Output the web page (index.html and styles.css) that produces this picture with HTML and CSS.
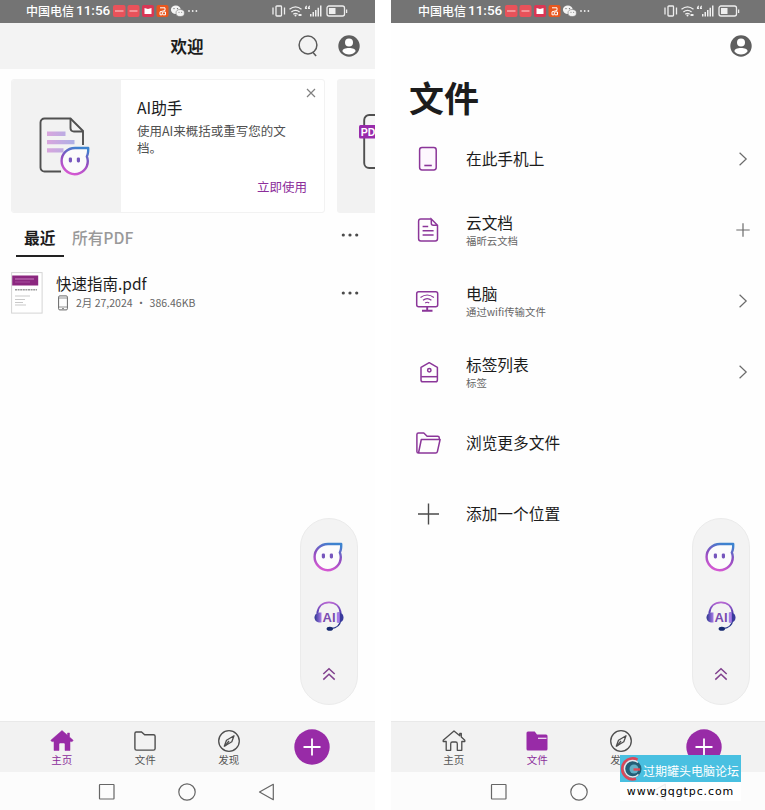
FILE: index.html
```html
<!DOCTYPE html>
<html lang="zh-CN">
<head>
<meta charset="utf-8">
<title>文件</title>
<link rel="stylesheet" href="styles.css">
</head>
<body>
<svg class="defs" width="0" height="0" aria-hidden="true">
  <defs>
    <linearGradient id="bubbleStroke" x1="0.7" y1="0" x2="0.4" y2="1">
      <stop offset="0" stop-color="#3d83cf"/><stop offset="0.45" stop-color="#8a4fc0"/><stop offset="1" stop-color="#d558d2"/>
    </linearGradient>
    <linearGradient id="lineFill" x1="0" y1="0" x2="1" y2="0">
      <stop offset="0" stop-color="#d9a5dd"/><stop offset="1" stop-color="#adb0e6"/>
    </linearGradient>
    <linearGradient id="band" x1="0" y1="0" x2="0" y2="1">
      <stop offset="0" stop-color="#b566d2"/><stop offset="1" stop-color="#4c3bb0"/>
    </linearGradient>
    <linearGradient id="cup" x1="0" y1="0" x2="1" y2="0">
      <stop offset="0" stop-color="#2e3591"/><stop offset="1" stop-color="#a77be8"/>
    </linearGradient>
    <symbol id="status-left" viewBox="0 0 86 14">
      <rect x="0" y="1" width="12.5" height="12" rx="2" fill="#e8525a"/><path d="M2 7h8.500" stroke="#f7b9ba" stroke-width="1.300"/>
      <rect x="14.500" y="1" width="12" height="12" rx="2" fill="#e8525a"/><path d="M16.500 7h8" stroke="#f7b9ba" stroke-width="1.300"/>
      <rect x="29" y="1" width="12" height="12" rx="2" fill="#d93654"/><path d="M31.500 4l3.500 1 3.500-1v6h-7z" fill="#fff"/>
      <rect x="43.500" y="1" width="12" height="12" rx="2" fill="#e8571e"/><path d="M47 3.800h5v2.700l-5 1.300v3h2.300V8M50 10.800h2.500V8H50" fill="none" stroke="#fff" stroke-width="1"/>
      <ellipse cx="62.800" cy="5.700" rx="4.900" ry="4.200" fill="#f4f4f4"/><ellipse cx="67.200" cy="9" rx="4.200" ry="3.500" fill="#f4f4f4" stroke="#777" stroke-width=".6"/>
      <g fill="#6b6b6b"><circle cx="61" cy="4.600" r=".7"/><circle cx="64.500" cy="4.600" r=".7"/><circle cx="66" cy="8.300" r=".5"/><circle cx="68.700" cy="8.300" r=".5"/></g>
      <g fill="#eee"><circle cx="76" cy="7" r=".9"/><circle cx="79.700" cy="7" r=".9"/><circle cx="83.400" cy="7" r=".9"/></g>
    </symbol>
    <symbol id="status-right" viewBox="0 0 78 14">
      <g fill="none" stroke="#eee" stroke-width="1.300">
        <rect x="4" y="2" width="5.500" height="10" rx=".8"/><path d="M1 3.500v7M12.500 3.500v7"/>
        <path d="M17.500 5.300q6-4.700 12 0M19.400 8q4.100-3.300 8.200 0M21.300 10.300q2.200-1.700 4.400 0"/>
        <rect x="55" y="2" width="17.500" height="10" rx="2"/><path d="M74.600 5.500v3.500"/>
      </g>
      <g fill="#eee"><circle cx="23.500" cy="11.600" r="1"/><path d="M26.500 10h3v2h-3z"/><path d="M33 5c-.5-1.500.2-3 2-3.500v1l-.8 1h.8V5zM36 5c-.5-1.500.2-3 2-3.500v1l-.8 1h.8V5z"/>
      <path d="M38 10h1.500v2.500H38zM40.500 8H42v4.500h-1.500zM43 6h1.500v6.500H43zM45.500 3.800H47v8.700h-1.500zM48 1.600h1.500v10.900H48z"/>
      <rect x="57" y="4" width="6.500" height="6"/></g>
    </symbol>
    <symbol id="search" viewBox="0 0 22 24"><circle cx="11" cy="11" r="8.900" fill="none" stroke="#5a5a5a" stroke-width="1.500"/><path d="M15.800 18.300l3.300 3.700" stroke="#5a5a5a" stroke-width="1.600"/></symbol>
    <symbol id="avatar" viewBox="0 0 22 22"><circle cx="11" cy="11" r="10.700" fill="#5e5e5e"/><circle cx="11" cy="7.400" r="4" fill="#fff"/><path d="M4.400 16.300c0-2.500 3-3.400 6.600-3.400s6.600.9 6.600 3.400c-1.600 2.100-4 3.200-6.600 3.200s-5-1.100-6.600-3.200z" fill="#fff"/></symbol>
    <symbol id="bubble" viewBox="0 0 30 30"><path d="M28.200 2H15C7 2 1.600 8.100 1.600 15S7.500 28.200 14.700 28.200 27.800 22.500 27.800 15c0-1.800-.3-3-1-4.500 1.200-2 1.500-4.500 1.400-8.500z" fill="#fff" fill-opacity=".7" stroke="url(#bubbleStroke)" stroke-width="2.400" stroke-linejoin="round"/><rect x="8.800" y="11.400" width="3.200" height="5" rx="1.300" fill="#7656bd"/><rect x="16.800" y="11.400" width="3.200" height="5" rx="1.300" fill="#7656bd"/></symbol>
    <symbol id="headset" viewBox="0 0 32 32">
      <path d="M4.300 13.500C5 6.200 9.900 2.400 16 2.400s11 3.800 11.700 11.100" fill="none" stroke="url(#band)" stroke-width="1.900"/>
      <path d="M27.600 20.500c-.5 4.500-4 7.500-9.600 8.200" fill="none" stroke="#27368c" stroke-width="1.300"/>
      <ellipse cx="16.800" cy="28.700" rx="3.200" ry="2" fill="#182b70"/>
      <path d="M8.500 12.500v10c-4 .5-7-1.500-7-5s3-5.500 7-5z" fill="url(#cup)"/><path d="M24.500 12.500v10c3.500.4 6-1.500 6-5s-2.500-5.400-6-5z" fill="#3a3a9c"/><path d="M23.800 12.500h3v10h-3z" fill="#a77be8"/>
      <text x="16.100" y="21.500" text-anchor="middle" class="ai-text">AI</text>
    </symbol>
    <symbol id="chevrons" viewBox="0 0 14 14"><path d="M1.300 7L7 1.700 12.700 7M1.300 12.600L7 7.300l5.700 5.300" fill="none" stroke="#81418e" stroke-width="1.500"/></symbol>
    <symbol id="doc-ai" viewBox="0 0 52 58">
      <path d="M22 54.500H5.500a4 4 0 0 1-4-4v-45a4 4 0 0 1 4-4h26L44 14v14" fill="none" stroke="#505050" stroke-width="1.900"/><path d="M31.500 1.500V11q0 3.500 3.500 3.500h9" fill="none" stroke="#505050" stroke-width="1.900"/>
      <g fill="url(#lineFill)"><path d="M8 14.500h18.500V19H8zM8 23h27.500v4.300H8zM8 31.200h16.500v4.300H8z"/></g>
    </symbol>
    <symbol id="pdf" viewBox="0 0 48 58"><rect x="5.200" y="2" width="42" height="53" rx="5" fill="#f5f5f5" stroke="#505050" stroke-width="1.900"/><rect x="0" y="12" width="32" height="13.500" rx="1.500" fill="#982bab"/><text x="1.800" y="22.500" class="pdf-text">PDF</text></symbol>
    <symbol id="phone-small" viewBox="0 0 10 16"><rect x=".6" y=".9" width="8.800" height="14" rx="1.200" fill="none" stroke="#666" stroke-width="1"/><path d="M1 3h8M1 12h8M4 13.500h2" stroke="#777" stroke-width=".8"/></symbol>
    <symbol id="more" viewBox="0 0 18 4"><g fill="#4b4b4b"><circle cx="2.300" cy="2" r="1.600"/><circle cx="9" cy="2" r="1.600"/><circle cx="15.700" cy="2" r="1.600"/></g></symbol>
    <symbol id="home-fill" viewBox="0 0 24 24"><path d="M12 1.500L.8 11.300l1 1.300H4V21.500h5v-6.300q0-1.200 1.200-1.200h3.600q1.200 0 1.200 1.200v6.300h5v-8.900h2.200l1-1.300-3.700-3.200V4h-2v2.200z" fill="#982ba7" stroke="#982ba7" stroke-width=".5"/></symbol>
    <symbol id="home" viewBox="0 0 24 24"><path d="M12 2L1.200 11.300V12.500H4.200V21.300h4.500v-6.500q0-1.800 1.700-1.800h3.200q1.700 0 1.700 1.800v6.500h4.500V12.500h3v-1.200L19.300 8V4.500h-1.500v2.300z" fill="none" stroke="#4e4e4e" stroke-width="1.300" stroke-linejoin="round"/></symbol>
    <symbol id="folder" viewBox="0 0 24 24"><path d="M3.200 3h5.300l3.200 2.700h8.800q1.600 0 1.600 1.600v12.200q0 1.600-1.600 1.600H3.600q-1.700 0-1.700-1.600V4.500Q1.900 3 3.200 3z" fill="none" stroke="#4e4e4e" stroke-width="1.400"/></symbol>
    <symbol id="folder-fill" viewBox="0 0 24 24"><path d="M3 2.500h6.700l2.300 3h9q1.500 0 1.500 1.500v13q0 1.500-1.500 1.500H3Q1.500 21.500 1.500 20V4Q1.500 2.500 3 2.500z" fill="#982ba7"/><path d="M13 9.300h8.500" stroke="#f3e6f5" stroke-width="1.200"/></symbol>
    <symbol id="compass" viewBox="0 0 24 24"><g fill="none" stroke="#4e4e4e" stroke-width="1.300"><circle cx="12" cy="12" r="10.300"/><path d="M17 6.800l-2.200 6-7.500 4.400 2.200-6z" stroke-linejoin="round"/><path d="M8 17l4-5"/></g></symbol>
    <symbol id="plus-round" viewBox="0 0 36 36"><circle cx="18" cy="18" r="17.700" fill="#982ba7"/><path d="M18 9.500v17M9.500 18h17" stroke="#fff" stroke-width="1.800"/></symbol>
    <symbol id="nav-square" viewBox="0 0 18 18"><rect x="1.500" y="1.500" width="14.500" height="14.500" rx=".5" fill="none" stroke="#666" stroke-width="1.200"/></symbol>
    <symbol id="nav-circle" viewBox="0 0 18 18"><circle cx="9" cy="9" r="8.200" fill="none" stroke="#666" stroke-width="1.200"/></symbol>
    <symbol id="nav-back" viewBox="0 0 18 18"><path d="M15.300 1.300v15.400L1.500 9z" fill="none" stroke="#666" stroke-width="1.200" stroke-linejoin="round"/></symbol>
    <symbol id="r-phone" viewBox="0 0 26 26"><rect x="4.600" y="1.600" width="16.600" height="22.400" rx="2.400" fill="#fdf7fe" stroke="#8b3699" stroke-width="1.500"/><path d="M9.300 19.500h7.500" stroke="#8b3699" stroke-width="1.600"/></symbol>
    <symbol id="r-doc" viewBox="0 0 26 26"><path d="M16 2H5.800Q3.600 2 3.600 4.200v17.500q0 2.200 2.200 2.200h14.500q2.200 0 2.200-2.200V8.200L16.300 2v4.200q0 2 2 2h4.200M7.600 9.500h5.600M7.600 13.800h11M7.600 18h11" fill="none" stroke="#8b3699" stroke-width="1.500"/></symbol>
    <symbol id="r-pc" viewBox="0 0 26 26"><g fill="none" stroke="#8b3699"><rect x="1.700" y="3.700" width="21" height="15" rx="2" stroke-width="1.500"/><path d="M5.500 9.500q6.700-5 13.400 0M8 12.300q4.200-3.300 8.400 0M10.200 15q2-1.500 4 0" stroke-width="1.200"/><path d="M12.200 19v3M7 22.700h10.500" stroke-width="1.900"/></g></symbol>
    <symbol id="r-tag" viewBox="0 0 26 26"><g fill="none" stroke="#8b3699" stroke-width="1.500"><path d="M14.200 3.700l-8.200 4.700V21q0 1.800 1.800 1.800h12.800q1.800 0 1.800-1.800V8.400z" stroke-linejoin="round"/><circle cx="14.300" cy="11.200" r="1.700"/><path d="M6.200 17.700h16.400"/></g></symbol>
    <symbol id="r-folder" viewBox="0 0 26 26"><path d="M3.500 23L6.300 9.500h18.800l-2.700 12.200q-.3 1.300-1.700 1.300H3.500q-1.600 0-1.600-1.600V4.500Q1.900 3 3.500 3h5.300l3.300 3.200h10.500q1.700 0 1.700 1.700v1.600" fill="none" stroke="#8b3699" stroke-width="1.500" stroke-linejoin="round"/></symbol>
    <symbol id="r-plus" viewBox="0 0 26 26"><path d="M13.500 2.500v21M3 13h21" stroke="#4b4b4b" stroke-width="1.400"/></symbol>
    <symbol id="chev" viewBox="0 0 14 14"><path d="M3.600 .8L10.200 7l-6.600 6.200" fill="none" stroke="#6b6b6b" stroke-width="1.200"/></symbol>
    <symbol id="plus" viewBox="0 0 14 14"><path d="M7 .3v13.400M.3 7h13.400" stroke="#6b6b6b" stroke-width="1.200"/></symbol>
    <symbol id="close" viewBox="0 0 10 10"><path d="M1 1l8 8M9 1L1 9" stroke="#808080" stroke-width="1.200"/></symbol>
    <symbol id="thumb" viewBox="0 0 32 42"><rect x=".6" y=".6" width="30.500" height="40.500" fill="#fff" stroke="#d4d4d4" stroke-width="1"/><rect x="1.200" y="3.500" width="26" height="10" fill="#8b277f"/><path d="M4 7h19" stroke="#cc8ac5" stroke-width=".9"/><path d="M4 10h15" stroke="#b35caa" stroke-width=".7"/><path d="M4 17.800h22" stroke="#999" stroke-width="1.600" stroke-dasharray="2 .6"/><path d="M4 24h15M4 27.500h10M4 30.500h8M4 33h11" stroke="#bbb" stroke-width=".8"/></symbol>
    <symbol id="brand" viewBox="0 0 24 24"><circle cx="12.500" cy="12" r="9" fill="#235e76"/><circle cx="14" cy="12" r="4.500" fill="#63afc5"/><path d="M17.500 2.800A10.300 10.300 0 1 0 16 21.600" fill="none" stroke="#d9485a" stroke-width="2.800"/><path d="M18 5.500A8.200 8.200 0 1 0 18.500 17.500" fill="none" stroke="#e3e8ee" stroke-width="1.500"/><path d="M13.500 12.500h6.500" stroke="#e14a55" stroke-width="2.400"/></symbol>
  </defs>
</svg>

<main class="screens">
  <section class="phone">
    <div class="status"><span class="carrier">中国电信</span><span class="clock">11:56</span><svg class="status-left"><use href="#status-left"/></svg><svg class="status-right"><use href="#status-right"/></svg></div>
    <header class="topbar"><span></span><h1>欢迎</h1><div class="top-actions"><svg class="search"><use href="#search"/></svg><svg class="avatar"><use href="#avatar"/></svg></div></header>
    <div class="cards">
      <article class="card">
        <div class="card-art"><svg class="doc-ai"><use href="#doc-ai"/></svg><svg class="art-bubble"><use href="#bubble"/></svg></div>
        <div class="card-body"><h2>AI助手</h2><p>使用AI来概括或重写您的文档。</p><a class="cta">立即使用</a><svg class="close"><use href="#close"/></svg></div>
      </article>
      <article class="card-next"><svg class="pdf"><use href="#pdf"/></svg></article>
    </div>
    <div class="tabs"><span class="tab active">最近</span><span class="tab">所有PDF</span><svg class="more"><use href="#more"/></svg></div>
    <div class="file">
      <svg class="thumb"><use href="#thumb"/></svg>
      <div class="file-info"><div class="file-name">快速指南.pdf</div><div class="meta"><svg class="phone-small"><use href="#phone-small"/></svg><span class="date">2月 27,2024</span><span class="dot">·</span><span class="size">386.46KB</span></div></div>
      <svg class="more"><use href="#more"/></svg>
    </div>
    <aside class="assist"><svg class="a-bubble"><use href="#bubble"/></svg><svg class="a-head"><use href="#headset"/></svg><svg class="a-up"><use href="#chevrons"/></svg></aside>
    <footer>
      <nav class="tabbar"><a class="on"><svg><use href="#home-fill"/></svg>主页</a><a><svg><use href="#folder"/></svg>文件</a><a><svg><use href="#compass"/></svg>发现</a><a><svg class="add"><use href="#plus-round"/></svg></a></nav>
      <div class="sysnav"><svg><use href="#nav-square"/></svg><svg><use href="#nav-circle"/></svg><svg><use href="#nav-back"/></svg></div>
    </footer>
  </section>

  <section class="phone second">
    <div class="status"><span class="carrier">中国电信</span><span class="clock">11:56</span><svg class="status-left"><use href="#status-left"/></svg><svg class="status-right"><use href="#status-right"/></svg></div>
    <header class="topbar plain"><svg class="avatar"><use href="#avatar"/></svg></header>
    <h1 class="big">文件</h1>
    <ul class="places">
      <li><svg class="ic"><use href="#r-phone"/></svg><div><b>在此手机上</b></div><svg class="end"><use href="#chev"/></svg></li>
      <li><svg class="ic"><use href="#r-doc"/></svg><div><b>云文档</b><small>福昕云文档</small></div><svg class="end"><use href="#plus"/></svg></li>
      <li><svg class="ic"><use href="#r-pc"/></svg><div><b>电脑</b><small>通过wifi传输文件</small></div><svg class="end"><use href="#chev"/></svg></li>
      <li><svg class="ic"><use href="#r-tag"/></svg><div><b>标签列表</b><small>标签</small></div><svg class="end"><use href="#chev"/></svg></li>
      <li><svg class="ic"><use href="#r-folder"/></svg><div><b>浏览更多文件</b></div></li>
      <li><svg class="ic"><use href="#r-plus"/></svg><div><b>添加一个位置</b></div></li>
    </ul>
    <aside class="assist"><svg class="a-bubble"><use href="#bubble"/></svg><svg class="a-head"><use href="#headset"/></svg><svg class="a-up"><use href="#chevrons"/></svg></aside>
    <footer>
      <nav class="tabbar"><a><svg><use href="#home"/></svg>主页</a><a class="on"><svg><use href="#folder-fill"/></svg>文件</a><a><svg><use href="#compass"/></svg>发现</a><a><svg class="add"><use href="#plus-round"/></svg></a></nav>
      <div class="sysnav"><svg><use href="#nav-square"/></svg><svg><use href="#nav-circle"/></svg><svg><use href="#nav-back"/></svg></div>
    </footer>
  </section>
</main>
<div class="stamp"><div class="stamp-top"><svg><use href="#brand"/></svg><span>过期罐头电脑论坛</span></div><div class="stamp-url">www.gqgtpc.com</div></div>
</body>
</html>
```
FILE: styles.css
```css
* { box-sizing: border-box; margin: 0; padding: 0; }
body { width: 765px; height: 810px; overflow: hidden; background: #fff; font-family: "Noto Sans CJK SC", sans-serif; color: #1c1c1c; position: relative; }
svg { display: block; flex: none; }
.defs { position: absolute; }
.ai-text { font: 700 13px "Liberation Sans", sans-serif; fill: #7a4bb0; }
.pdf-text { font: 700 10.500px "Liberation Sans", sans-serif; fill: #fff; }

.screens { display: flex; justify-content: space-between; height: 810px; }
.phone { width: 375px; height: 810px; background: #fefefe; position: relative; display: flex; flex-direction: column; overflow: hidden; }
.second { width: 374px; }

.status { height: 23px; flex: none; background: #747474; display: flex; align-items: center; padding: 0 25px 2px 26px; color: #fff; line-height: 21px; white-space: nowrap; }
.second .status { padding: 0 23px 2px 27px; }
.carrier { font-size: 12px; font-weight: 500; width: 50px; }
.clock { font-family: Roboto, sans-serif; font-size: 13.500px; font-weight: 500; width: 37px; }
.status-left { width: 86px; height: 14px; }
.status-right { width: 78px; height: 14px; margin-left: auto; }

.topbar { height: 46px; flex: none; background: #f3f3f3; display: grid; grid-template-columns: 1fr auto 1fr; align-items: center; padding: 0 15px 1px 14px; }
.topbar h1 { font-size: 16.500px; line-height: 24px; font-weight: 700; padding-top: 1px; }
.top-actions { justify-self: end; display: flex; gap: 19px; align-items: center; }
.search { width: 22px; height: 24px; }
.avatar { width: 22px; height: 22px; }
.topbar.plain { background: transparent; display: flex; justify-content: flex-end; padding-right: 13px; }

.cards { display: flex; gap: 12px; padding: 10px 0 0 11px; height: 144px; flex: none; }
.card { width: 314px; height: 134px; flex: none; display: flex; border: 1px solid #f2f2f2; border-radius: 3px; background: #fff; overflow: hidden; }
.card-art { width: 109px; background: #f2f2f2; position: relative; padding: 37px 0 0 27px; }
.doc-ai { width: 52px; height: 58px; }
.art-bubble { position: absolute; left: 48px; top: 66px; width: 30px; height: 30px; }
.card-body { flex: 1; position: relative; padding: 16px 17px 0 16px; display: flex; flex-direction: column; }
.card-body h2 { font-size: 15.700px; line-height: 24px; font-weight: 400; }
.card-body p { font-size: 12.500px; line-height: 17px; color: #505050; width: 160px; padding-top: 2px; }
.cta { align-self: flex-end; font-size: 12.500px; line-height: 18px; color: #8c2d9b; margin-top: 22px; }
.close { position: absolute; right: 8px; top: 8px; width: 10px; height: 10px; }
.card-next { width: 60px; height: 134px; flex: none; background: #f2f2f2; border-radius: 3px 0 0 3px; padding: 34px 0 0 22px; }
.pdf { width: 48px; height: 58px; }

.tabs { height: 44px; flex: none; display: flex; padding: 10px 16px 0; }
.tab { font-size: 15.700px; line-height: 30px; height: 34px; font-weight: 500; color: #999; padding: 0 8px; }
.tab.active { color: #1c1c1c; font-weight: 700; border-bottom: 2px solid #222; width: 48px; }
.more { width: 18px; height: 4px; margin-left: auto; }
.tabs .more { margin-top: 10px; }
.file { display: flex; padding: 15px 16px 0 11px; }
.thumb { width: 32px; height: 42px; }
.file-info { padding: 0 0 0 13px; }
.file-name { font-size: 15.500px; line-height: 23px; }
.meta { display: flex; align-items: center; font-size: 10.500px; line-height: 14px; color: #666; }
.phone-small { width: 10px; height: 16px; margin: 0 8px 0 2px; }
.dot { width: 17px; text-align: center; }
.file .more { margin-top: 19px; }

.assist { position: absolute; left: 300px; top: 518px; width: 58px; height: 187px; border-radius: 29px; background: #f3f3f3; border: 1px solid #ebebeb; display: flex; flex-direction: column; align-items: center; }
.second .assist { left: 301px; }
.a-bubble { width: 30px; height: 30px; margin: 23px 2px 0 0; }
.a-head { width: 32px; height: 32px; margin-top: 28px; }
.a-up { width: 14px; height: 14px; margin-top: 35px; }

footer { margin-top: auto; }
.tabbar { height: 51px; background: #f2f2f2; border-top: 1px solid #e9e9e9; display: grid; grid-template-columns: repeat(4, 83.500px); padding-left: 20px; }
.second .tabbar { padding-left: 21px; }
.tabbar a { display: flex; flex-direction: column; align-items: center; font-size: 10.500px; line-height: 14px; color: #555; padding-top: 7px; }
.tabbar a.on { color: #8c2d9b; }
.tabbar svg { width: 24px; height: 24px; }
.tabbar .add { width: 36px; height: 36px; }
.sysnav { height: 38px; background: #fcfcfc; display: flex; gap: 62px; padding: 11px 0 0 98px; }
.second .sysnav { padding-left: 99px; }
.sysnav svg { width: 18px; height: 18px; }

.big { font-size: 35px; line-height: 50px; font-weight: 700; padding-left: 18px; margin-top: 3px; }
.places { list-style: none; margin-top: 1px; }
.places li { height: 71px; display: flex; align-items: center; padding: 0 15px 0 24px; }
.ic { width: 26px; height: 26px; margin-right: 25px; }
.places b { display: block; font-weight: 400; font-size: 15.700px; line-height: 22px; }
.places small { display: block; font-size: 10.400px; line-height: 13px; color: #666; }
.end { width: 14px; height: 14px; margin-left: auto; }

.stamp { position: absolute; left: 620px; top: 755px; width: 121px; height: 46px; background: rgba(255, 255, 255, .88); }
.stamp-top { height: 27px; background: #49c0e1; display: flex; align-items: center; color: #fff; font-size: 12px; line-height: 27px; white-space: nowrap; padding-top: 2px; }
.stamp-top svg { width: 24px; height: 24px; margin: -2px -1px 0 0; }
.stamp-top span { line-height: 24px; padding-top: 3px; }
.stamp-url { font: 11px/20px "DejaVu Sans", sans-serif; letter-spacing: .9px; color: #000; text-align: center; }
```
